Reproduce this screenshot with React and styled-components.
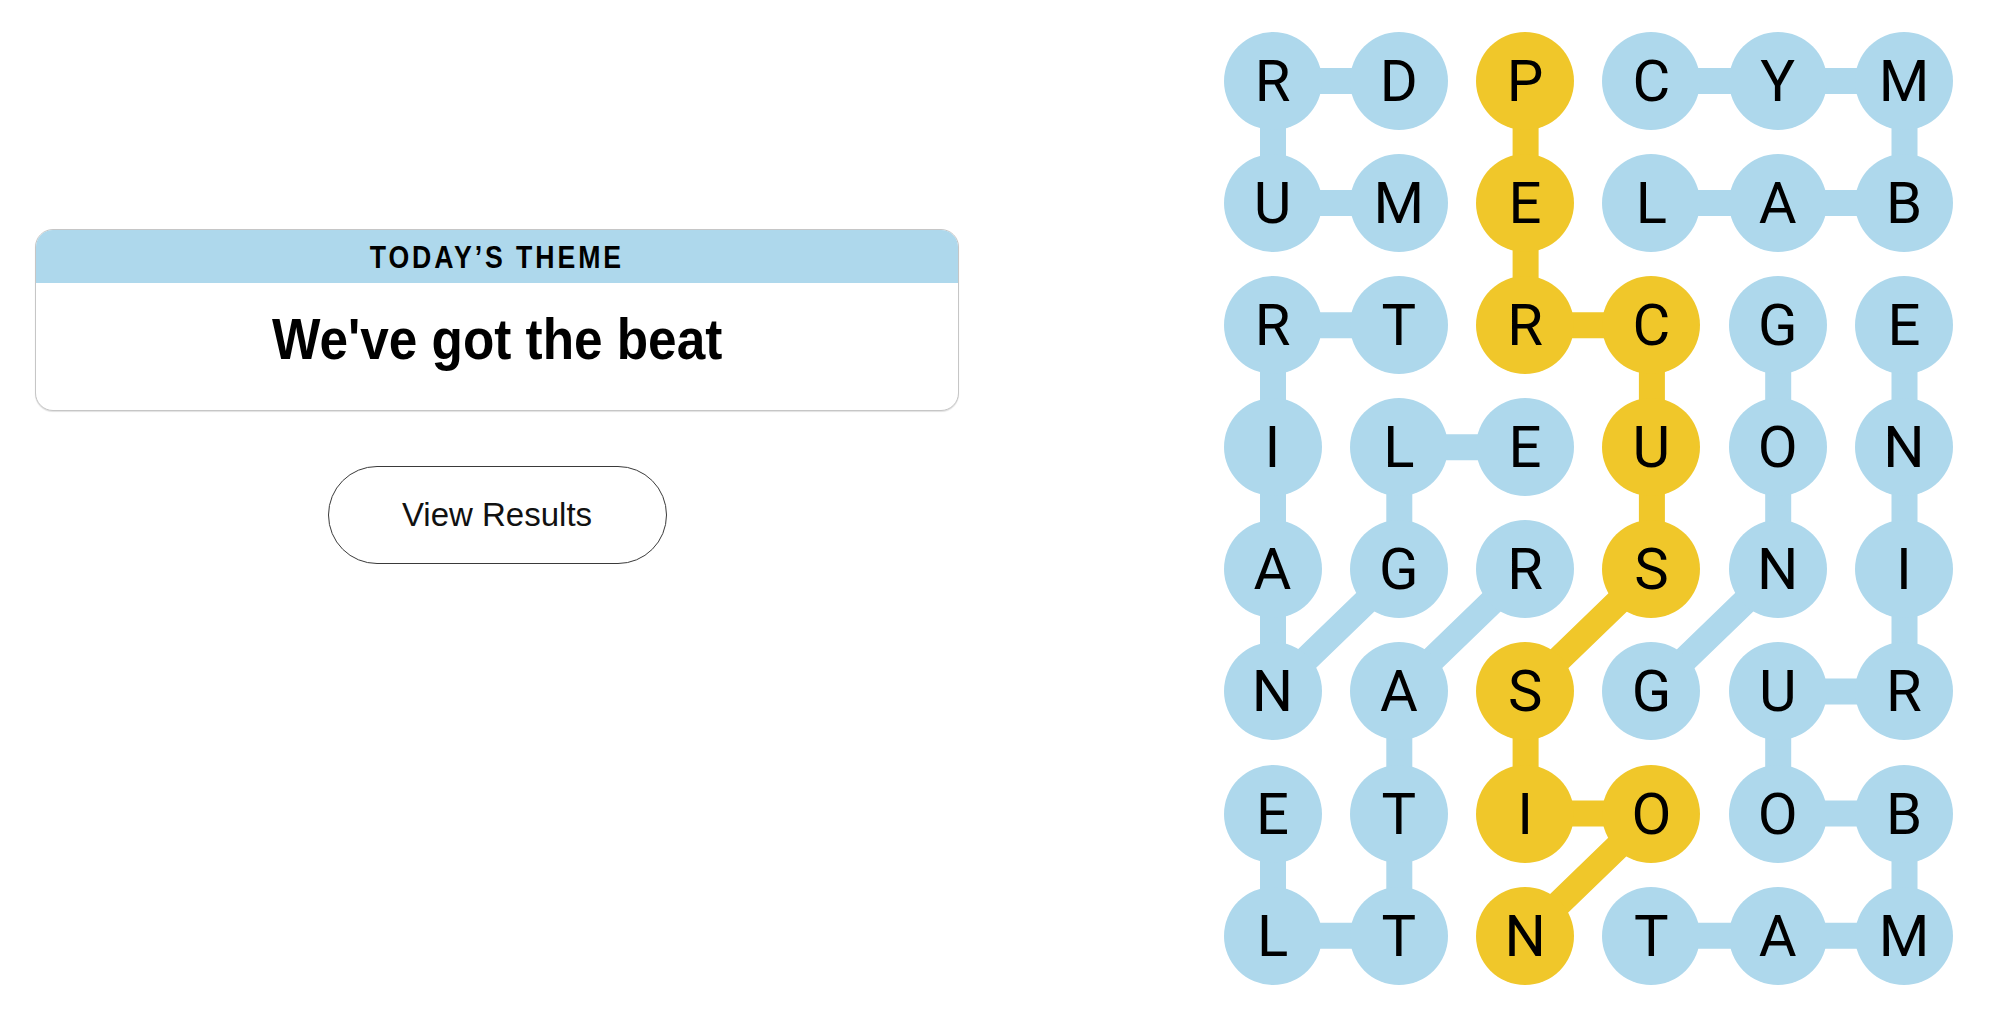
import React from 'react';
import styled, { createGlobalStyle } from 'styled-components';

const COL = 126.3;
const ROW = 122.1;
const DOT = 98;

const BLUE = '#aed8ec';
const YELLOW = '#f0c72a';

const GRID = [
    'RDPCYM',
    'UMELAB',
    'RTRCGE',
    'ILEUON',
    'AGRSNI',
    'NASGUR',
    'ETIOOB',
    'LTNTAM',
];

const WORDS = [
    { tone: 'spangram', cells: [[0, 2], [1, 2], [2, 2], [2, 3], [3, 3], [4, 3], [5, 2], [6, 2], [6, 3], [7, 2]] },
    { tone: 'theme', cells: [[0, 1], [0, 0], [1, 0], [1, 1]] },
    { tone: 'theme', cells: [[0, 3], [0, 4], [0, 5], [1, 5], [1, 4], [1, 3]] },
    { tone: 'theme', cells: [[2, 1], [2, 0], [3, 0], [4, 0], [5, 0], [4, 1], [3, 1], [3, 2]] },
    { tone: 'theme', cells: [[7, 3], [7, 4], [7, 5], [6, 5], [6, 4], [5, 4], [5, 5], [4, 5], [3, 5], [2, 5]] },
    { tone: 'theme', cells: [[2, 4], [3, 4], [4, 4], [5, 3]] },
    { tone: 'theme', cells: [[4, 2], [5, 1], [6, 1], [7, 1], [7, 0], [6, 0]] },
];

const toneOf = {};
WORDS.forEach((w) => w.cells.forEach(([r, c]) => { toneOf[`${r}-${c}`] = w.tone; }));

const GlobalStyle = createGlobalStyle`
    html, body {
        margin: 0;
        padding: 0;
        background: #fff;
    }
    body {
        font-family: "Liberation Sans", Arial, sans-serif;
        color: #000;
    }
`;

const Page = styled.main`
    display: flex;
    align-items: flex-start;
    padding: 32px 0 0 36px;
    width: 1999px;
    height: 1031px;
    box-sizing: border-box;
`;

const LeftPanel = styled.section`
    width: 922px;
    margin-top: 197px;
    display: flex;
    flex-direction: column;
    align-items: center;
`;

const ThemeCard = styled.div`
    width: 100%;
    border: 1px solid #c6c6c6;
    border-radius: 18px;
    overflow: hidden;
    box-shadow: 0 1px 1px rgba(0, 0, 0, 0.12);
    background: #fff;
`;

const ThemeHeader = styled.div`
    height: 53px;
    background: ${BLUE};
    display: flex;
    align-items: center;
    justify-content: center;
    padding-top: 2px;
    box-sizing: border-box;
`;

const HeaderLabel = styled.h1`
    margin: 0;
    font-family: "Liberation Sans", Arial, sans-serif;
    font-weight: 700;
    font-size: 31px;
    letter-spacing: 3.4px;
    line-height: 1;
    transform: scaleX(0.86);
`;

const ThemeBody = styled.div`
    height: 127px;
    display: flex;
    align-items: center;
    justify-content: center;
    padding-bottom: 14px;
    box-sizing: border-box;
`;

const ThemeTitle = styled.h2`
    margin: 0;
    font-family: "Liberation Sans", Arial, sans-serif;
    font-weight: 700;
    font-size: 57px;
    letter-spacing: 0;
    line-height: 1;
    transform: scaleX(0.9);
`;

const ResultsButton = styled.button`
    margin-top: 55px;
    width: 339px;
    height: 98px;
    border: 1.5px solid #3a3a3a;
    border-radius: 49px;
    background: #fff;
    font-family: "Liberation Sans", Arial, sans-serif;
    font-size: 33px;
    color: #111;
    cursor: pointer;
`;

const Board = styled.div`
    position: relative;
    margin-left: 265.5px;
    width: ${COL * 5 + DOT}px;
    height: ${ROW * 7 + DOT}px;
`;

const Links = styled.svg`
    position: absolute;
    inset: 0;
    z-index: 0;
`;

const LetterGrid = styled.div`
    position: relative;
    z-index: 1;
    display: grid;
    grid-template-columns: repeat(6, ${DOT}px);
    grid-auto-rows: ${DOT}px;
    column-gap: ${COL - DOT}px;
    row-gap: ${ROW - DOT}px;
`;

const Letter = styled.button`
    width: ${DOT}px;
    height: ${DOT}px;
    border: none;
    border-radius: 50%;
    padding: 0;
    background: ${(p) => (p.$tone === 'spangram' ? YELLOW : p.$tone === 'theme' ? BLUE : '#fff')};
    display: flex;
    align-items: center;
    justify-content: center;
    font-family: Roboto, "Liberation Sans", sans-serif;
    font-weight: 400;
    font-size: 58px;
    line-height: 1;
    color: #000;
    text-transform: uppercase;
`;

const center = (r, c) => `${c * COL + DOT / 2},${r * ROW + DOT / 2}`;

export default function App() {
    return (
        <>
            <GlobalStyle />
            <Page>
                <LeftPanel>
                    <ThemeCard>
                        <ThemeHeader>
                            <HeaderLabel>TODAY’S THEME</HeaderLabel>
                        </ThemeHeader>
                        <ThemeBody>
                            <ThemeTitle>We've got the beat</ThemeTitle>
                        </ThemeBody>
                    </ThemeCard>
                    <ResultsButton>View Results</ResultsButton>
                </LeftPanel>
                <Board>
                    <Links width={COL * 5 + DOT} height={ROW * 7 + DOT}>
                        {WORDS.map((w, i) => (
                            <polyline
                                key={i}
                                points={w.cells.map(([r, c]) => center(r, c)).join(' ')}
                                fill="none"
                                stroke={w.tone === 'spangram' ? YELLOW : BLUE}
                                strokeWidth="26"
                                strokeLinejoin="round"
                            />
                        ))}
                    </Links>
                    <LetterGrid>
                        {GRID.map((row, r) =>
                            row.split('').map((ch, c) => (
                                <Letter key={`${r}-${c}`} $tone={toneOf[`${r}-${c}`]}>
                                    {ch}
                                </Letter>
                            ))
                        )}
                    </LetterGrid>
                </Board>
            </Page>
        </>
    );
}
